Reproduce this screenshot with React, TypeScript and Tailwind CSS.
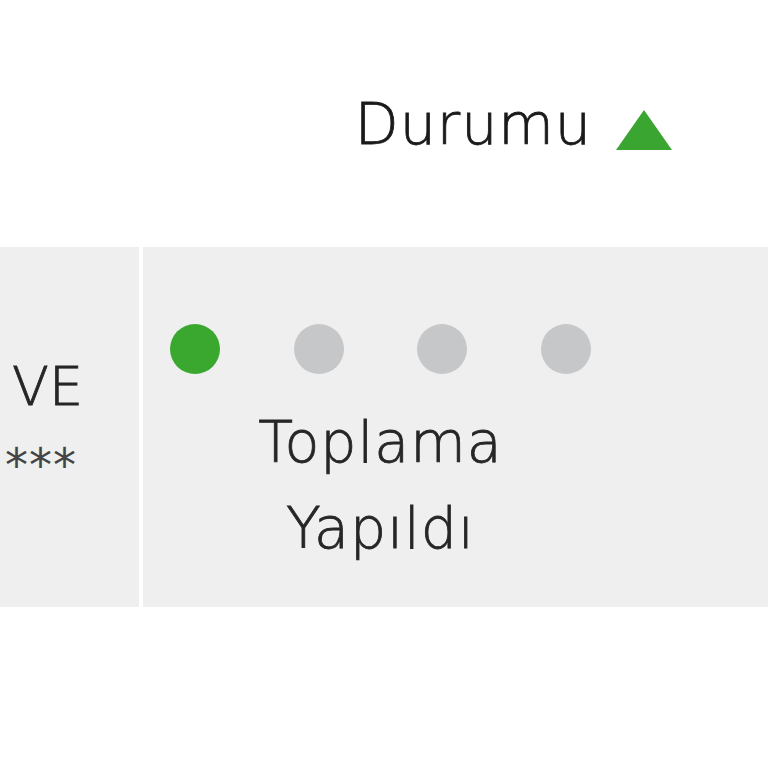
import React from "react";

export default function App() {
  const font = { fontFamily: '"DejaVu Sans", "Liberation Sans", sans-serif' };
  return (
    <div className="w-[768px] h-[768px] bg-white overflow-hidden text-[#1a1a1a]" style={font}>
      <div className="h-[247px] flex justify-end items-start pt-[96px] pr-[96px]">
        <span className="text-[57px] leading-none font-extralight tracking-[1px] [-webkit-text-stroke:0.8px_#1a1a1a]">Durumu</span>
        <svg width="56" height="40" viewBox="0 0 56 40" className="ml-[24px] mt-[14px]">
          <polygon points="28,0 56,40 0,40" fill="#3ba531" />
        </svg>
      </div>
      <div className="h-[360px] flex">
        <div className="w-[139px] bg-[#efefef] flex flex-col pt-[97px] pl-[12px] overflow-hidden">
          <span className="text-[54px] leading-[86px] whitespace-nowrap font-extralight [-webkit-text-stroke:0.8px_#262626] text-[#262626]">VE</span>
          <span className="text-[46px] leading-none -ml-[7px] mt-[12px] tracking-[1px] text-[#444]">***</span>
        </div>
        <div className="w-[4px] bg-white" />
        <div className="flex-1 bg-[#efefef] pl-[27px] pt-[77px]">
          <div className="w-[421px] flex flex-col items-center">
            <div className="w-full flex justify-between">
              <div className="w-[50px] h-[50px] rounded-full bg-[#3aa82f]" />
              <div className="w-[50px] h-[50px] rounded-full bg-[#c5c7c9]" />
              <div className="w-[50px] h-[50px] rounded-full bg-[#c5c7c9]" />
              <div className="w-[50px] h-[50px] rounded-full bg-[#c5c7c9]" />
            </div>
            <div className="mt-[25px] text-[57px] leading-[86px] text-center text-[#262626] font-extralight tracking-[1px] [-webkit-text-stroke:0.8px_#262626]">
              <div>Toplama</div>
              <div>Yapıldı</div>
            </div>
          </div>
        </div>
      </div>
    </div>
  );
}
